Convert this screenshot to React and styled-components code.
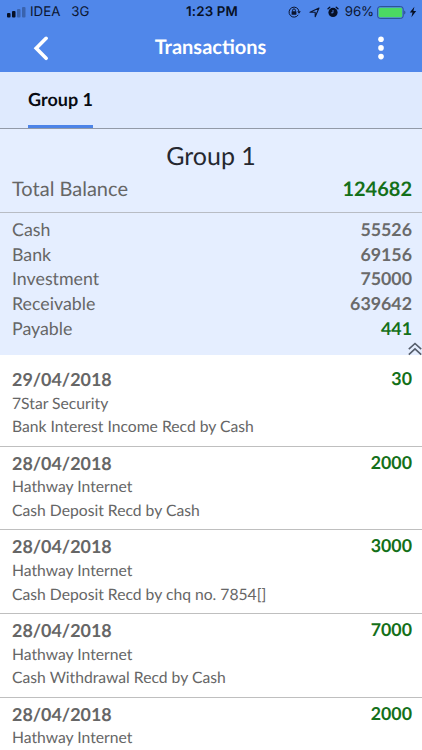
import React from "react";
import styled, { createGlobalStyle } from "styled-components";

const GlobalStyle = createGlobalStyle`
  * { box-sizing: border-box; }
  body { margin: 0; background: #fff; font-family: Lato, "Liberation Sans", sans-serif; color: #666; text-rendering: geometricPrecision; }
`;

const Screen = styled.div`
  width: 422px;
  height: 750px;
  overflow: hidden;
  display: flex;
  flex-direction: column;
`;

const Header = styled.header`
  flex: none;
  height: 72px;
  background: #5087ea;
`;

const StatusBar = styled.div`
  height: 24px;
  padding: 0 5px 0 7px;
  display: grid;
  grid-template-columns: 1fr auto 1fr;
  align-items: center;
  font: 400 13.3px/24px Inter, sans-serif;
  color: #0b1530;
`;

const Carrier = styled.div`
  display: flex;
  align-items: center;
  gap: 4px;
`;

const Network = styled.span`
  margin-left: 7px;
`;

const Clock = styled.div`
  font-weight: 600;
  letter-spacing: 0.15px;
  color: #071026;
`;

const Indicators = styled.div`
  display: flex;
  align-items: center;
  justify-content: flex-end;
`;

const Percent = styled.span`
  margin: 0 3px 0 6px;
  letter-spacing: -0.1px;
`;

const Glyph = styled.svg`
  display: block;
  flex: none;
  margin-left: ${(p) => p.$left || 0}px;
`;

const NavBar = styled.div`
  height: 48px;
  padding: 0 36px 0 33px;
  display: grid;
  grid-template-columns: 1fr auto 1fr;
  align-items: center;
`;

const NavTitle = styled.h1`
  margin: 0;
  padding: 0 0 2px 2px;
  font-size: 20px;
  line-height: 44px;
  font-weight: 700;
  color: #fff;
`;

const NavButton = styled.button`
  border: 0;
  padding: 0;
  background: none;
  justify-self: ${(p) => p.$side};
`;

const Tabs = styled.nav`
  flex: none;
  height: 57px;
  padding-left: 28px;
  display: flex;
  background: #dfeafe;
  border-bottom: 1px solid #929aa8;
`;

const Tab = styled.div`
  width: 65px;
  border-bottom: 3px solid #4d84e8;
  font-size: 18px;
  line-height: 54px;
  font-weight: 700;
  white-space: nowrap;
  color: #080b12;
`;

const Summary = styled.section`
  flex: none;
  height: 226px;
  background: #e5eeff;
`;

const SummaryTitle = styled.h2`
  margin: 0;
  padding-top: 10px;
  font-size: 25px;
  line-height: 34px;
  font-weight: 400;
  text-align: center;
  color: #252830;
`;

const TotalRow = styled.div`
  height: 40px;
  padding: 0 10px 0 12px;
  display: flex;
  justify-content: space-between;
  border-bottom: 1px solid #b8bcc4;
  font-size: 20px;
  line-height: 33px;
`;

const Accounts = styled.div`
  padding: 4px 10px 0 12px;
`;

const AccountRow = styled.div`
  height: 24.7px;
  display: flex;
  justify-content: space-between;
  font-size: 17.8px;
  line-height: 24.3px;
`;

const Amount = styled.span`
  font-weight: 700;
  color: ${(p) => (p.$credit ? "#147019" : "#6a6a6a")};
`;

const CollapseRow = styled.div`
  padding-top: 2px;
  display: flex;
  justify-content: flex-end;
`;

const List = styled.main`
  padding-top: 8px;
`;

const Transaction = styled.article`
  height: 83.7px;
  padding: 5px 10px 0 12px;
  display: flex;
  justify-content: space-between;
  border-bottom: 1px solid #bfbfbf;
  font-size: 15.7px;
  line-height: 23.5px;
`;

const DateText = styled.div`
  padding-bottom: 1.7px;
  font-size: 17.9px;
  font-weight: 700;
  line-height: 23px;
`;

const Value = styled(Amount)`
  font-size: 17.8px;
  line-height: 21.4px;
`;

const accounts = [
  ["Cash", 55526],
  ["Bank", 69156],
  ["Investment", 75000],
  ["Receivable", 639642],
  ["Payable", 441, true],
];

const transactions = [
  ["29/04/2018", "7Star Security", "Bank Interest Income Recd by Cash", 30],
  ["28/04/2018", "Hathway Internet", "Cash Deposit Recd by Cash", 2000],
  ["28/04/2018", "Hathway Internet", "Cash Deposit Recd by chq no. 7854[]", 3000],
  ["28/04/2018", "Hathway Internet", "Cash Withdrawal Recd by Cash", 7000],
  ["28/04/2018", "Hathway Internet", null, 2000],
];

const SignalIcon = () => (
  <Glyph width="19" height="12" viewBox="0 0 19 12" fill="#071026">
    <rect x="0" y="7" width="3.5" height="4.5" rx="1" />
    <rect x="5" y="5" width="3.5" height="6.5" rx="1" />
    <rect x="10" y="3" width="3.5" height="8.5" rx="1" opacity=".3" />
    <rect x="15" y="1" width="3.5" height="10.5" rx="1" opacity=".3" />
  </Glyph>
);

const RotationLockIcon = () => (
  <Glyph width="13" height="12" viewBox="0 0 13 12" fill="none" stroke="#0b1530" strokeWidth="1">
    <path d="M10.3 8.8A5 5 0 1 1 11 5.3" />
    <path d="M9.2 5.2h3.6L11 7.7z" fill="#0b1530" stroke="none" />
    <rect x="3.6" y="5.3" width="4.8" height="3.5" rx=".4" fill="#0b1530" stroke="none" />
    <path d="M4.6 5.5V4.3a1.4 1.4 0 0 1 2.8 0v1.2" />
  </Glyph>
);

const LocationIcon = () => (
  <Glyph $left={8} width="11" height="11" viewBox="0 0 11 11" fill="none" stroke="#0b1530" strokeWidth="1.1" strokeLinejoin="round">
    <path d="M10 1 6.2 9.8V5.3H1z" />
  </Glyph>
);

const AlarmIcon = () => (
  <Glyph $left={7} width="12" height="12" viewBox="0 0 12 12" fill="#071026">
    <circle cx="6" cy="6.4" r="4.6" />
    <path d="M1 2.8 2.8 1.2M11 2.8 9.2 1.2" stroke="#071026" strokeWidth="1.3" strokeLinecap="round" />
    <path d="M6 4v2.8H4.2" fill="none" stroke="#5087ea" strokeWidth=".9" />
  </Glyph>
);

const BatteryIcon = () => (
  <Glyph width="29" height="13" viewBox="0 0 29 13">
    <rect x=".6" y=".6" width="25.6" height="11.8" rx="2.5" fill="#5087ea" stroke="#2b508f" strokeWidth="1" />
    <rect x="1.7" y="1.7" width="23.4" height="9.6" rx="1.4" fill="#4bd963" />
    <path d="M27.2 4.5c1.7.8 1.7 3.2 0 4z" fill="#2b508f" />
  </Glyph>
);

const BoltIcon = () => (
  <Glyph $left={3} width="8" height="12" viewBox="0 0 8 12" fill="#071026">
    <path d="M5.4.8.8 6.6h2.7L2.4 11.2 7.2 5.1H4.4z" />
  </Glyph>
);

export default function App() {
  return (
    <Screen>
      <GlobalStyle />
      <Header>
        <StatusBar>
          <Carrier>
            <SignalIcon />
            <span>IDEA</span>
            <Network>3G</Network>
          </Carrier>
          <Clock>1:23 PM</Clock>
          <Indicators>
            <RotationLockIcon />
            <LocationIcon />
            <AlarmIcon />
            <Percent>96%</Percent>
            <BatteryIcon />
            <BoltIcon />
          </Indicators>
        </StatusBar>
        <NavBar>
          <NavButton $side="start" aria-label="Back">
            <Glyph width="16" height="25" viewBox="0 0 16 25" fill="none" stroke="#fff" strokeWidth="3.6" strokeLinecap="round" strokeLinejoin="miter">
              <path d="M13.1 2.3 3.2 12.3l9.9 10" />
            </Glyph>
          </NavButton>
          <NavTitle>Transactions</NavTitle>
          <NavButton $side="end" aria-label="More">
            <Glyph width="10" height="24" viewBox="0 0 10 24" fill="#fff">
              <circle cx="5" cy="3.2" r="2.8" />
              <circle cx="5" cy="11.9" r="2.8" />
              <circle cx="5" cy="20.6" r="2.8" />
            </Glyph>
          </NavButton>
        </NavBar>
      </Header>
      <Tabs>
        <Tab>Group 1</Tab>
      </Tabs>
      <Summary>
        <SummaryTitle>Group 1</SummaryTitle>
        <TotalRow>
          <span>Total Balance</span>
          <Amount $credit>124682</Amount>
        </TotalRow>
        <Accounts>
          {accounts.map(([name, amount, credit]) => (
            <AccountRow key={name}>
              <span>{name}</span>
              <Amount $credit={credit}>{amount}</Amount>
            </AccountRow>
          ))}
        </Accounts>
        <CollapseRow>
          <Glyph width="14" height="14" viewBox="0 0 14 14" fill="none" stroke="#555d6b" strokeWidth="1.6">
            <path d="M.8 7.2 7 1.5l6.2 5.7M.8 12.6 7 6.9l6.2 5.7" />
          </Glyph>
        </CollapseRow>
      </Summary>
      <List>
        {transactions.map(([date, party, detail, value], i) => (
          <Transaction key={i}>
            <div>
              <DateText>{date}</DateText>
              <div>{party}</div>
              {detail && <div>{detail}</div>}
            </div>
            <Value $credit>{value}</Value>
          </Transaction>
        ))}
      </List>
    </Screen>
  );
}
